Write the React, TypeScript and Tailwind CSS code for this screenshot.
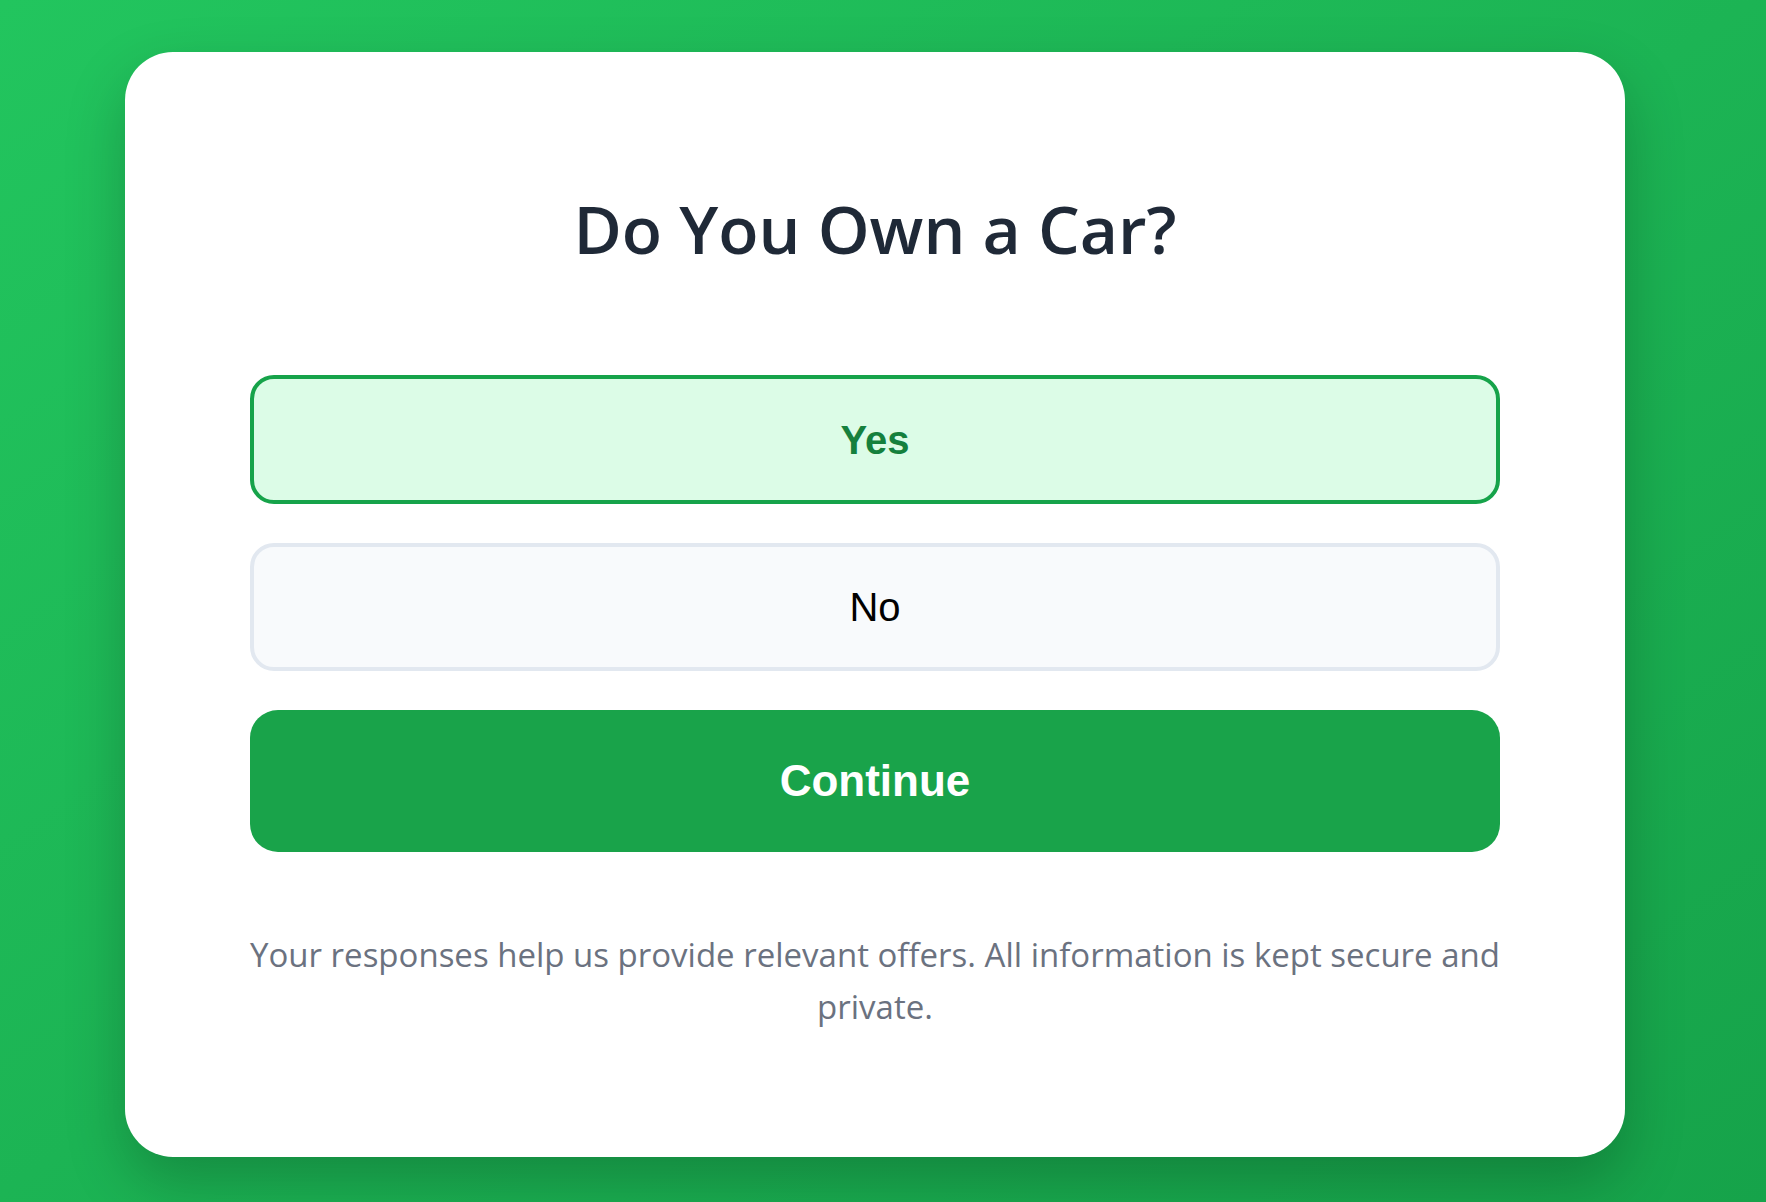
import { useState } from "react";

export default function App() {
  const [choice, setChoice] = useState<"yes" | "no">("yes");

  const optionClass = (active: boolean) =>
    active
      ? "flex h-[129px] w-full items-center justify-center rounded-[24px] border-[4px] border-[#16a34a] bg-[#dcfce7] text-[40px] font-bold text-[#15803d]"
      : "flex h-[128px] w-full items-center justify-center rounded-[24px] border-[4px] border-[#e2e8f0] bg-[#f8fafc] text-[40px] font-normal text-black";

  return (
    <div className="min-h-screen h-[1202px] w-full bg-linear-to-br from-[#22c55e] to-[#16a34a] pl-[125px] pt-[52px]">
      <div className="flex h-[1105px] w-[1500px] flex-col rounded-[48px] bg-white px-[125px] pt-[134px] shadow-[0_25px_60px_rgba(0,0,0,0.22)]">
        <h1 className="text-center font-['Open_Sans',sans-serif] text-[66px] font-semibold leading-[84px] text-[#1f2937]">
          Do You Own a Car?
        </h1>

        <div className="mt-[105px] flex flex-col gap-[39px] font-['Liberation_Sans',Arial,sans-serif]">
          <button type="button" className={optionClass(choice === "yes")} onClick={() => setChoice("yes")}>
            Yes
          </button>
          <button type="button" className={optionClass(choice === "no")} onClick={() => setChoice("no")}>
            No
          </button>
          <button
            type="button"
            className="flex h-[142px] w-full items-center justify-center rounded-[28px] bg-[#19a34a] text-[44px] font-bold text-white"
          >
            Continue
          </button>
        </div>

        <p className="mt-[77px] text-center font-['Open_Sans',sans-serif] text-[33px] leading-[52px] text-[#6b7280]">
          Your responses help us provide relevant offers. All information is kept secure and private.
        </p>
      </div>
    </div>
  );
}
